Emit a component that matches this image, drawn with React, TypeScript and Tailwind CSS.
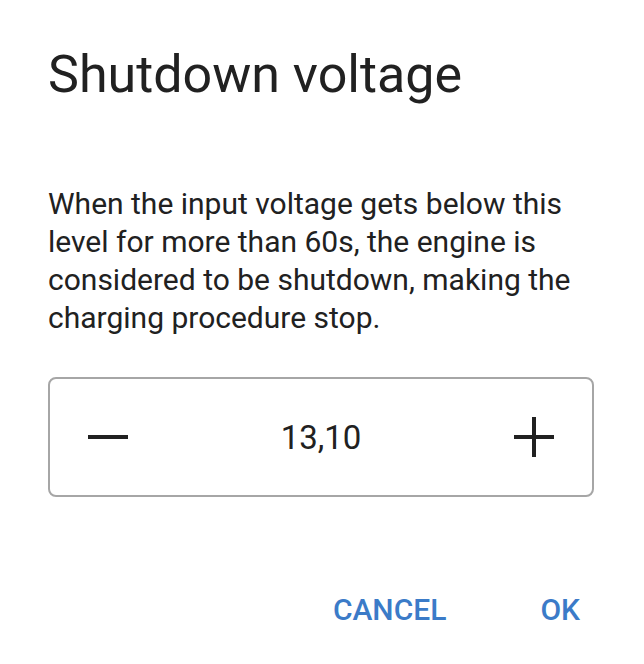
import { useState } from 'react'

const MinusIcon = () => (
  <svg width="40" height="40" viewBox="0 0 40 40" fill="#212121">
    <rect x="0" y="18" width="40" height="4" />
  </svg>
)

const PlusIcon = () => (
  <svg width="40" height="40" viewBox="0 0 40 40" fill="#212121">
    <rect x="0" y="18" width="40" height="4" />
    <rect x="18" y="0" width="4" height="40" />
  </svg>
)

export default function App() {
  const [value, setValue] = useState(13.1)

  const step = (delta: number) => setValue((v) => Math.round((v + delta) * 100) / 100)

  return (
    <div
      className="h-[664px] w-[644px] bg-white text-[#212121]"
      style={{ fontFamily: 'Roboto, "Noto Sans", sans-serif' }}
    >
      <div className="flex flex-col pl-12 pr-[48px] pt-[45px]">
        <h1 className="text-[52px] leading-[60px] font-normal">Shutdown voltage</h1>

        <p className="mt-[80px] text-[30px] leading-[38px]">
          When the input voltage gets below this level for more than 60s, the engine is
          considered to be shutdown, making the charging procedure stop.
        </p>

        <div className="mt-[40px] flex h-[120px] w-[546px] items-center justify-between rounded-lg border-2 border-[#a6a6a6] px-[38px]">
          <button type="button" onClick={() => step(-0.05)} aria-label="decrease">
            <MinusIcon />
          </button>
          <span className="text-[33px] leading-none">{value.toFixed(2).replace('.', ',')}</span>
          <button type="button" onClick={() => step(0.05)} aria-label="increase">
            <PlusIcon />
          </button>
        </div>
      </div>

      <div className="mt-[95px] flex justify-end gap-[94px] pr-[64px]">
        <button type="button" className="text-[30px] leading-[36px] font-medium text-[#3b7bc8]">
          CANCEL
        </button>
        <button type="button" className="text-[30px] leading-[36px] font-medium text-[#3b7bc8]">
          OK
        </button>
      </div>
    </div>
  )
}
